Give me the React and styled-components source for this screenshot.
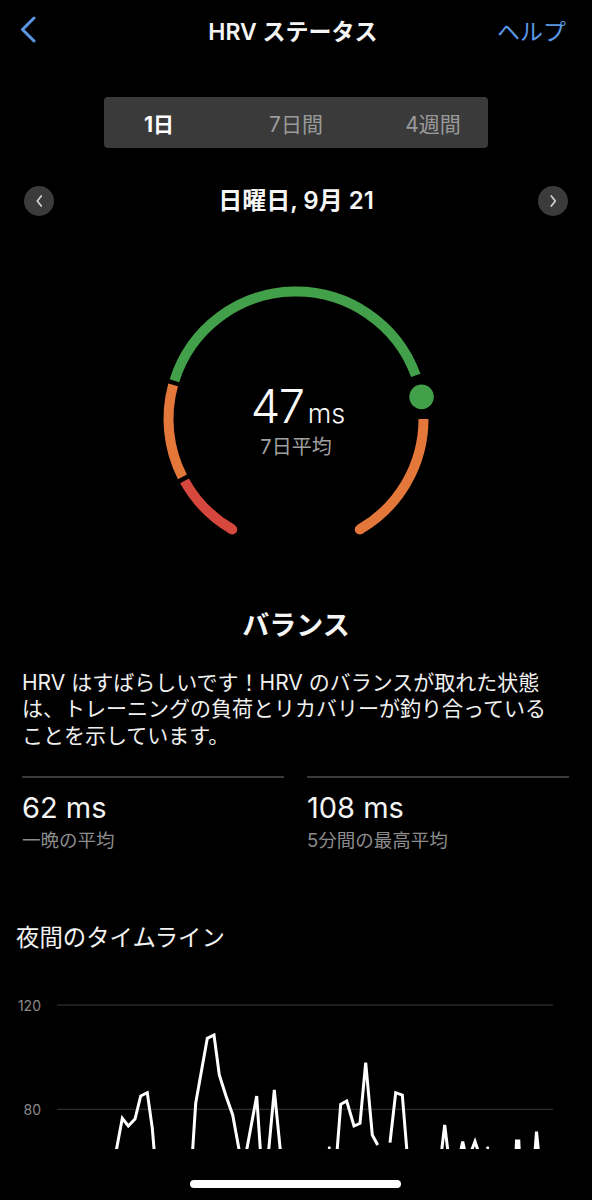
import React from "react";
import styled, { createGlobalStyle } from "styled-components";

const FONT = `"Inter", "Noto Sans CJK JP", "Noto Sans", sans-serif`;

const GlobalStyle = createGlobalStyle`
  html, body {
    margin: 0;
    padding: 0;
    background: #000;
  }
  body {
    font-family: ${FONT};
    color: #f2f2f2;
    -webkit-font-smoothing: antialiased;
  }
`;

const Screen = styled.div`
  position: relative;
  width: 592px;
  height: 1200px;
  overflow: hidden;
  background: #000;
  display: flex;
  flex-direction: column;
`;

const NavBar = styled.header`
  height: 60px;
  display: grid;
  grid-template-columns: 100px 1fr 100px;
  align-items: center;
  padding: 0 26px 0 20px;
`;

const BackButton = styled.button`
  background: none;
  border: 0;
  padding: 0;
  width: 18px;
  height: 28px;
  display: flex;
  align-items: center;
  cursor: pointer;
  margin-top: -2px;
`;

const NavTitle = styled.h1`
  margin: 0;
  text-align: center;
  font-size: 23px;
  font-weight: 600;
  color: #f4f4f4;
  white-space: nowrap;
`;

const HelpLink = styled.a`
  justify-self: end;
  font-size: 23px;
  color: #5a98e6;
  white-space: nowrap;
`;

const Segmented = styled.div`
  align-self: center;
  margin-top: 37px;
  width: 384px;
  height: 51px;
  border-radius: 4px;
  background: #3a3a3b;
  display: grid;
  grid-template-columns: 110px 1fr 110px;
  align-items: center;
`;

const SegmentItem = styled.span`
  text-align: center;
  font-size: 21px;
  font-weight: ${(p) => (p.$active ? 700 : 400)};
  color: ${(p) => (p.$active ? "#ffffff" : "#9a9a9a")};
  white-space: nowrap;
`;

const DateRow = styled.div`
  margin-top: 38px;
  height: 30px;
  padding: 0 24px;
  display: grid;
  grid-template-columns: 30px 1fr 30px;
  align-items: center;
`;

const RoundButton = styled.button`
  width: 30px;
  height: 30px;
  border-radius: 50%;
  border: 0;
  padding: 0;
  background: #3b3b3c;
  display: flex;
  align-items: center;
  justify-content: center;
`;

const DateLabel = styled.div`
  text-align: center;
  font-size: 24px;
  line-height: 30px;
  font-weight: 600;
  color: #f6f6f6;
  white-space: nowrap;
`;

const GaugeWrap = styled.div`
  margin-top: 53px;
  align-self: center;
  width: 300px;
  height: 300px;
  display: grid;
  & > * {
    grid-area: 1 / 1;
  }
`;

const GaugeCenter = styled.div`
  align-self: start;
  margin-top: 114px;
  display: flex;
  flex-direction: column;
  align-items: center;
`;

const GaugeValue = styled.div`
  display: flex;
  align-items: baseline;
  gap: 4px;
  line-height: 46px;
  height: 46px;
  margin-left: 4px;
`;

const ValueNum = styled.span`
  font-size: 47px;
  font-weight: 300;
  letter-spacing: -1.5px;
  color: #fafafa;
`;

const ValueUnit = styled.span`
  font-size: 27px;
  font-weight: 300;
  color: #fafafa;
`;

const GaugeCaption = styled.div`
  margin-top: 5px;
  font-size: 20px;
  line-height: 26px;
  color: #a0a0a0;
`;

const StatusTitle = styled.h2`
  margin: 39px 0 0;
  text-align: center;
  font-size: 27px;
  line-height: 36px;
  font-weight: 700;
  color: #f6f6f6;
`;

const Description = styled.p`
  margin: 26px 0 0;
  padding: 0 22px;
  font-size: 21px;
  line-height: 26.3px;
  color: #f0f0f0;
  white-space: nowrap;
`;

const StatsGrid = styled.div`
  margin-top: 27px;
  padding: 0 23px 0 22px;
  display: grid;
  grid-template-columns: 1fr 1fr;
  column-gap: 23px;
`;

const StatCell = styled.div`
  border-top: 2px solid #3a3a3a;
  padding-top: 12px;
`;

const StatValue = styled.div`
  font-size: 29px;
  line-height: 36px;
  font-weight: 400;
  color: #f4f4f4;
  white-space: nowrap;
`;

const StatLabel = styled.div`
  margin-top: 2px;
  font-size: 18.5px;
  line-height: 24px;
  color: #8c8c8c;
  white-space: nowrap;
`;

const SectionTitle = styled.h3`
  margin: 70px 0 0;
  padding-left: 16px;
  font-size: 23.4px;
  line-height: 32px;
  font-weight: 400;
  color: #f2f2f2;
`;

const ChartSvg = styled.svg`
  display: block;
  margin-top: 36px;
  width: 592px;
  height: 159px;
`;

const HomeIndicator = styled.div`
  position: absolute;
  left: 190px;
  bottom: 12px;
  width: 211px;
  height: 8px;
  border-radius: 4px;
  background: #ffffff;
`;

/* ---------- gauge drawing ---------- */
const C = 150;
const R = 127.5;
const pt = (a) => {
  const r = (a * Math.PI) / 180;
  return [C + R * Math.cos(r), C + R * Math.sin(r)];
};
const arc = (a1, a2) => {
  const [x1, y1] = pt(a1);
  const [x2, y2] = pt(a2);
  const large = a2 - a1 > 180 ? 1 : 0;
  return `M${x1.toFixed(2)} ${y1.toFixed(2)} A${R} ${R} 0 ${large} 1 ${x2.toFixed(2)} ${y2.toFixed(2)}`;
};

const GREEN = "#42a04a";
const ORANGE = "#e4773a";
const RED = "#d6473d";

const segments = [
  { from: 120, to: 151, color: RED, capAt: 120 },
  { from: 153, to: 195.5, color: ORANGE },
  { from: 197.5, to: 340, color: GREEN },
  { from: 0, to: 60, color: ORANGE, capAt: 60 },
];

function Gauge() {
  const [dx, dy] = pt(350);
  return (
    <svg width="300" height="300" viewBox="0 0 300 300">
      {segments.map((s, i) => {
        const cap = s.capAt != null ? pt(s.capAt) : null;
        return (
          <g key={i}>
            <path d={arc(s.from, s.to)} fill="none" stroke={s.color} strokeWidth="10" />
            {cap && <circle cx={cap[0]} cy={cap[1]} r="5" fill={s.color} />}
          </g>
        );
      })}
      <circle cx={dx} cy={dy} r="12.3" fill={GREEN} />
    </svg>
  );
}

/* ---------- chart drawing ---------- */
const OY = 990;
const series = [
  [[116, 1152], [122.3, 1118.3], [128.3, 1126], [135, 1119], [140.7, 1096], [147.3, 1092.7], [152.3, 1128.3], [154.3, 1152]],
  [[192.5, 1152], [195.7, 1103.3], [207.3, 1038.3], [214, 1035], [219.3, 1075], [226, 1096], [232.7, 1115], [239.5, 1152]],
  [[246.3, 1152], [256.7, 1096], [260.5, 1152]],
  [[268.5, 1152], [274.3, 1090], [280.5, 1152]],
  [[337, 1152], [340.7, 1104.3], [346.7, 1101], [354, 1126], [360, 1123.3], [365.7, 1062.7], [372.3, 1135], [377.7, 1145]],
  [[390, 1142.7], [395.7, 1092.7], [402.3, 1095], [407, 1152]],
  [[441.5, 1152], [444.7, 1125], [448, 1152]],
  [[460.5, 1152], [462.7, 1141.5], [465, 1152]],
  [[471, 1152], [475, 1141.5], [478.5, 1152]],
  [[516, 1152], [516.5, 1141], [518.8, 1141], [519.3, 1152]],
  [[535, 1152], [536.5, 1131.7], [538.5, 1152]],
];
const dots = [[329.3, 1147.7], [487.7, 1147.7]];

function Timeline() {
  const grid = [
    { label: "120", y: 1005 },
    { label: "80", y: 1109.3 },
  ];
  return (
    <ChartSvg viewBox="0 0 592 159">
      {grid.map((g) => (
        <g key={g.label}>
          <line x1="57" x2="553" y1={g.y - OY} y2={g.y - OY} stroke="#3a3a3a" strokeWidth="1" />
          <text
            x="41"
            y={g.y - OY}
            textAnchor="end"
            dominantBaseline="central"
            fontFamily={FONT}
            fontSize="14"
            fill="#8a8a8a"
          >
            {g.label}
          </text>
        </g>
      ))}
      {series.map((s, i) => (
        <polyline
          key={i}
          points={s.map(([x, y]) => `${x},${(y - OY).toFixed(1)}`).join(" ")}
          fill="none"
          stroke="#ffffff"
          strokeWidth="3"
          strokeLinejoin="miter"
        />
      ))}
      {dots.map(([x, y], i) => (
        <circle key={i} cx={x} cy={y - OY} r="1.5" fill="#ffffff" />
      ))}
    </ChartSvg>
  );
}

const Chevron = ({ dir = "left", size = 12, color = "#d0d0d0", width = 1.8 }) => (
  <svg width={size * 0.55} height={size} viewBox="0 0 6 12">
    <path
      d={dir === "left" ? "M5 1 L1 6 L5 11" : "M1 1 L5 6 L1 11"}
      fill="none"
      stroke={color}
      strokeWidth={width}
      strokeLinecap="round"
      strokeLinejoin="round"
    />
  </svg>
);

export default function App() {
  return (
    <>
      <GlobalStyle />
      <Screen>
        <NavBar>
          <BackButton aria-label="戻る">
            <svg width="16" height="27" viewBox="0 0 16 27">
              <path
                d="M14 2 L2.5 13.5 L14 25"
                fill="none"
                stroke="#5a98e6"
                strokeWidth="3"
                strokeLinecap="round"
                strokeLinejoin="round"
              />
            </svg>
          </BackButton>
          <NavTitle>HRV ステータス</NavTitle>
          <HelpLink>ヘルプ</HelpLink>
        </NavBar>

        <Segmented>
          <SegmentItem $active>1日</SegmentItem>
          <SegmentItem>7日間</SegmentItem>
          <SegmentItem>4週間</SegmentItem>
        </Segmented>

        <DateRow>
          <RoundButton aria-label="前へ">
            <Chevron dir="left" />
          </RoundButton>
          <DateLabel>日曜日, 9月 21</DateLabel>
          <RoundButton aria-label="次へ">
            <Chevron dir="right" />
          </RoundButton>
        </DateRow>

        <GaugeWrap>
          <Gauge />
          <GaugeCenter>
            <GaugeValue>
              <ValueNum>47</ValueNum>
              <ValueUnit>ms</ValueUnit>
            </GaugeValue>
            <GaugeCaption>7日平均</GaugeCaption>
          </GaugeCenter>
        </GaugeWrap>

        <StatusTitle>バランス</StatusTitle>
        <Description>
          HRV はすばらしいです！HRV のバランスが取れた状態
          <br />
          は、トレーニングの負荷とリカバリーが釣り合っている
          <br />
          ことを示しています。
        </Description>

        <StatsGrid>
          <StatCell>
            <StatValue>62 ms</StatValue>
            <StatLabel>一晩の平均</StatLabel>
          </StatCell>
          <StatCell>
            <StatValue>108 ms</StatValue>
            <StatLabel>5分間の最高平均</StatLabel>
          </StatCell>
        </StatsGrid>

        <SectionTitle>夜間のタイムライン</SectionTitle>
        <Timeline />

        <HomeIndicator />
      </Screen>
    </>
  );
}
